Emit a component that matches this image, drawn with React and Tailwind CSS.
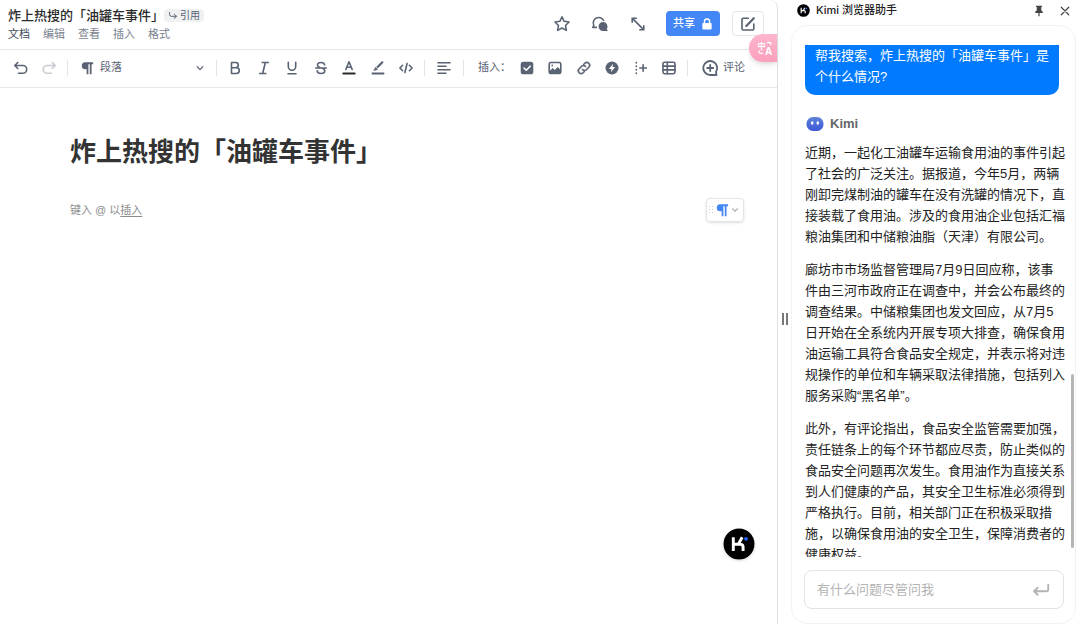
import React from 'react';

const Icon = ({ size = 16, className = '', children }) => (
    <svg
        width={size}
        height={size}
        viewBox="0 0 16 16"
        fill="none"
        stroke="currentColor"
        strokeWidth="1.6"
        strokeLinecap="round"
        strokeLinejoin="round"
        className={`shrink-0 ${className}`}
        aria-hidden="true"
    >
        {children}
    </svg>
);

const Pilcrow = ({ className }) => (
    <Icon className={className} size={14}>
        <path d="M15 1.5H6a4 4 0 0 0 0 8h1.6V15h2V3.6h1.6V15h2V3.6H15z" fill="currentColor" stroke="none" />
    </Icon>
);

const KimiLogo = ({ className }) => (
    <svg viewBox="0 0 32 32" className={`shrink-0 ${className}`} aria-hidden="true">
        <circle cx="16" cy="16" r="15.5" fill="#000" />
        <path d="M10.3 9.300v13.700M19.200 9.300l-3.600 6.500M10.300 16.200h7.200q2.600.2 2.600 3V23" fill="none" stroke="#fff" strokeWidth="2.900" />
        <circle cx="23" cy="10.800" r="1.900" fill="#2563ff" />
    </svg>
);

const formatTools = [
    { label: '粗体', icon: <path d="M4.5 2.5h4.2a2.6 2.6 0 0 1 0 5.2H4.5zM4.5 7.7h4.9a2.9 2.9 0 0 1 0 5.8H4.5z" /> },
    { label: '斜体', icon: <path d="M6.300 2.500h6M3.700 13.500h6M9.300 2.500l-2.600 11" /> },
    { label: '下划线', icon: <path d="M4.300 2.300v4.200a3.700 3.700 0 0 0 7.400 0V2.300M4 13.800h8" /> },
    {
        label: '删除线',
        icon: <path d="M11.6 4.8C11.3 3.3 9.9 2.5 8 2.5c-2.1 0-3.5 1-3.5 2.5 0 1.2.9 2 2.4 2.5M2.7 8h10.6M9.8 8.5c1.4.5 2 1.2 2 2.3 0 1.7-1.5 2.7-3.7 2.7-2.2 0-3.7-.9-3.9-2.6" />,
    },
    {
        label: '文字颜色',
        icon: (
            <>
                <path d="M4.800 9.500L8 1.800l3.200 7.700M5.800 7.300h4.400" />
                <path d="M2.300 13.400h11.400" stroke="#2b2b2b" strokeWidth="2" />
            </>
        ),
    },
    {
        label: '高亮',
        icon: (
            <>
                <path d="M12.300 2.300L7.600 7" strokeWidth="2.200" />
                <path d="M5.700 7.600l1.800 1.800-3.200 1z" fill="currentColor" strokeWidth="0.800" />
                <path d="M2.500 13.400h11" strokeWidth="2" />
            </>
        ),
    },
    { label: '代码', icon: <path d="M4.600 5.300L1.900 8l2.700 2.700M11.400 5.300L14.100 8l-2.700 2.700M9.100 3.500l-2.200 9" /> },
];

const insertTools = [
    {
        label: '待办',
        icon: (
            <>
                <rect x="1.700" y="1.700" width="12.600" height="12.600" rx="2.600" fill="currentColor" stroke="none" />
                <path d="M5 8l2.200 2.200 4-4" stroke="#fff" />
            </>
        ),
    },
    {
        label: '图片',
        icon: (
            <>
                <rect x="2.200" y="2.500" width="11.600" height="11" rx="1.600" />
                <path d="M2.500 11.200L5.600 8l2.200 2 2.900-3 3 3v3.200H2.500z" fill="currentColor" stroke="none" />
                <circle cx="5.200" cy="5.400" r="0.900" fill="currentColor" stroke="none" />
            </>
        ),
    },
    {
        label: '链接',
        icon: (
            <path d="M6.500 9.500a2.600 2.600 0 0 0 3.900.2l2.400-2.400a2.800 2.800 0 0 0-4-4L7.600 4.500M9.500 6.500a2.600 2.600 0 0 0-3.900-.2L3.200 8.700a2.800 2.800 0 0 0 4 4l1.200-1.200" />
        ),
    },
    {
        label: '快捷',
        icon: (
            <>
                <circle cx="8" cy="8" r="6.500" fill="currentColor" stroke="none" />
                <path d="M9 3.800L4.900 8.900h2.600L7 12.200l4.100-5.100H8.500z" fill="#fff" stroke="none" />
            </>
        ),
    },
    {
        label: '更多',
        icon: (
            <>
                <path d="M3.300 2.600v.2M3.300 6.100v.2M3.300 9.600v.2M3.300 13.100v.2" strokeWidth="1.800" />
                <path d="M6.800 8h6.600M10.100 4.700v6.600" />
            </>
        ),
    },
    {
        label: '表格',
        icon: (
            <>
                <rect x="2" y="2.300" width="12" height="11.400" rx="1.600" />
                <path d="M2 6.100h12M2 9.900h12M6.300 2.300v11.400" />
            </>
        ),
    },
];

const ToolButton = ({ label, children, className = '' }) => (
    <button type="button" aria-label={label} className={`flex h-7 w-7 items-center justify-center ${className}`}>
        {children}
    </button>
);

const Divider = () => <span className="h-4 w-px shrink-0 bg-[#e3e5e8]" />;

const DocHeader = () => (
    <header className="relative flex h-[50px] shrink-0 items-center justify-between border-b border-[#e6e7e9] pr-[13px] pb-0.5 pl-2">
        <div>
            <div className="flex items-center">
                <span className="text-[13px] leading-5 font-medium text-[#2b2b2b]">炸上热搜的「油罐车事件」</span>
                <button type="button" className="flex h-[13px] items-center gap-0.5 rounded bg-[#eff0f2] px-1 text-[10px] text-[#596373]">
                    <Icon size={10}>
                        <path d="M2.500 2.500v3a3 3 0 0 0 3 3h8M10 5l3.500 3.500L10 12" />
                    </Icon>
                    引用
                </button>
            </div>
            <nav className="flex gap-[13px] text-[11px] leading-4 text-[#7a828e]">
                <button type="button" className="text-[#404a59]">文档</button>
                <button type="button">编辑</button>
                <button type="button">查看</button>
                <button type="button">插入</button>
                <button type="button">格式</button>
            </nav>
        </div>

        <div className="flex items-center text-[#596373]">
            <div className="mr-3.5 flex gap-2.5">
                <ToolButton label="收藏">
                    <Icon size={18}>
                        <path d="M8 1.600l1.900 4 4.400.6-3.200 3.100.8 4.400L8 11.600l-3.900 2.100.8-4.400-3.200-3.100 4.400-.6z" strokeWidth="1.400" />
                    </Icon>
                </ToolButton>
                <ToolButton label="评论列表">
                    <Icon size={18}>
                        <path d="M4.800 11H1.600l.9-1.800a4.700 4.700 0 1 1 8.700-4.300" strokeWidth="1.400" />
                        <path d="M10.700 6.200a4 4 0 1 0 0 8h4.300l-1-1.700a4 4 0 0 0-3.300-6.300z" fill="currentColor" stroke="none" />
                    </Icon>
                </ToolButton>
                <ToolButton label="展开">
                    <Icon>
                        <path d="M2.200 6.800V2.200h4.600M2.400 2.400l11.200 11.200M13.800 9.200v4.600H9.200" strokeLinecap="butt" strokeLinejoin="miter" />
                    </Icon>
                </ToolButton>
            </div>
            <button type="button" className="mr-3 flex h-[25px] w-[54px] items-center justify-center gap-1.5 rounded bg-[#4287f5] text-[11px] font-medium text-white">
                共享
                <Icon size={12}>
                    <path d="M4.600 7V4.800a3.400 3.400 0 0 1 6.800 0V7" strokeWidth="1.900" />
                    <rect x="1.800" y="6.500" width="12.400" height="8.800" rx="1.200" fill="currentColor" stroke="none" />
                </Icon>
            </button>
            <button type="button" aria-label="新建" className="flex h-[25px] w-8 items-center justify-center rounded border border-[#e3e5e8]">
                <Icon>
                    <path d="M8.400 2.200H3.200A1.200 1.200 0 0 0 2 3.400v9.400A1.200 1.200 0 0 0 3.200 14h9.400a1.200 1.200 0 0 0 1.200-1.200V8" />
                    <path d="M6.300 9.900l7.500-7.700" strokeWidth="2.200" />
                </Icon>
            </button>
        </div>

        <button
            type="button"
            aria-label="翻译"
            className="absolute top-[34px] right-0 flex h-7 w-7 items-center justify-center rounded-l-full bg-linear-to-b from-[#fdb6cd] to-[#fa9fbc] pl-1 text-white shadow-md"
        >
            <Icon>
                <text x="0.500" y="8.500" fontSize="8" fontWeight="700" fill="currentColor" stroke="none">中</text>
                <text x="8" y="14.500" fontSize="10" fontWeight="700" fill="currentColor" stroke="none">A</text>
                <path d="M10.500 2.500h1.800q1.500 0 1.500 1.500v.8M2 10.800v1q0 1.500 1.500 1.500h2" strokeWidth="1.300" />
            </Icon>
        </button>
    </header>
);

const Toolbar = () => (
    <div className="flex h-[38px] shrink-0 items-center border-b border-[#e6e7e9] pb-0.5 text-[11px] text-[#596373]">
        <ToolButton label="撤销" className="ml-[7px]">
            <Icon><path d="M4.800 2.500L1.800 5.500l3 3M2 5.500h7.800a3.900 3.900 0 0 1 0 7.800H5.500" /></Icon>
        </ToolButton>
        <ToolButton label="重做" className="mr-1 text-[#c9ccd1]">
            <Icon><path d="M11.200 2.500l3 3-3 3M14 5.500H6.200a3.900 3.900 0 0 0 0 7.800h4.300" /></Icon>
        </ToolButton>
        <Divider />
        <label className="mr-[11px] ml-3 flex items-center">
            <Pilcrow />
            <select aria-label="段落样式" className="ml-1.5 w-[95px] appearance-none bg-transparent">
                <option>段落</option>
            </select>
            <Icon size={10}><path d="M3.500 6L8 10.500 12.500 6" strokeWidth="1.800" /></Icon>
        </label>
        <Divider />
        <div className="mx-1 flex w-[199px] justify-between">
            {formatTools.map((tool) => (
                <ToolButton key={tool.label} label={tool.label}>
                    <Icon>{tool.icon}</Icon>
                </ToolButton>
            ))}
        </div>
        <Divider />
        <ToolButton label="对齐" className="mx-[5px]">
            <Icon><path d="M2 2.800h12M2 6.300h8M2 9.800h12M2 13.300h8" /></Icon>
        </ToolButton>
        <Divider />
        <span className="ml-3.5 w-[35px] whitespace-nowrap">插入：</span>
        <div className="mr-1 flex w-[170px] justify-between">
            {insertTools.map((tool) => (
                <ToolButton key={tool.label} label={tool.label}>
                    <Icon>{tool.icon}</Icon>
                </ToolButton>
            ))}
        </div>
        <Divider />
        <button type="button" className="ml-[13px] flex items-center gap-1 whitespace-nowrap">
            <Icon size={18}>
                <path d="M13.800 14.200H8.200a6.200 6.200 0 1 1 5.100-2.700zM8.200 5.300v5.400M5.500 8h5.400" />
            </Icon>
            评论
        </button>
    </div>
);

const Editor = () => (
    <main className="relative flex min-w-0 flex-1 flex-col rounded-tr-lg border-r border-[#e0e1e3] bg-white">
        <DocHeader />
        <Toolbar />
        <article className="flex-1 pt-11 pr-[33px] pl-[70px]">
            <h1 className="text-[26px] leading-10 font-bold text-[#333]">炸上热搜的「油罐车事件」</h1>
            <div className="mt-[26px] flex items-center justify-between">
                <p className="text-[11px] text-[#8c8c8c]">
                    键入 @ 以<a href="#insert" className="underline underline-offset-2">插入</a>
                </p>
                <button
                    type="button"
                    aria-label="段落菜单"
                    className="flex h-6 w-[38px] items-center justify-center gap-0.5 rounded border border-[#e3e4e8] pr-0.5 text-[#4287f5] shadow-sm"
                >
                    <svg width="4" height="10" viewBox="0 0 4 10" fill="#c9ccd1" aria-hidden="true">
                        <path d="M0 1h1v1H0zM3 1h1v1H3zM0 4h1v1H0zM3 4h1v1H3zM0 7h1v1H0zM3 7h1v1H3z" />
                    </svg>
                    <Pilcrow />
                    <Icon size={8} className="text-[#b4b8bf]"><path d="M3 5.500l5 5 5-5" strokeWidth="2.400" /></Icon>
                </button>
            </div>
        </article>
        <button type="button" aria-label="打开 Kimi" className="absolute right-[22px] bottom-16 h-8 w-8 rounded-full shadow">
            <KimiLogo className="h-8 w-8" />
        </button>
    </main>
);

const answer = [
    '近期，一起化工油罐车运输食用油的事件引起了社会的广泛关注。据报道，今年5月，两辆刚卸完煤制油的罐车在没有洗罐的情况下，直接装载了食用油。涉及的食用油企业包括汇福粮油集团和中储粮油脂（天津）有限公司。',
    '廊坊市市场监督管理局7月9日回应称，该事件由三河市政府正在调查中，并会公布最终的调查结果。中储粮集团也发文回应，从7月5日开始在全系统内开展专项大排查，确保食用油运输工具符合食品安全规定，并表示将对违规操作的单位和车辆采取法律措施，包括列入服务采购“黑名单”。',
    '此外，有评论指出，食品安全监管需要加强，责任链条上的每个环节都应尽责，防止类似的食品安全问题再次发生。食用油作为直接关系到人们健康的产品，其安全卫生标准必须得到严格执行。目前，相关部门正在积极采取措施，以确保食用油的安全卫生，保障消费者的健康权益。',
];

const Assistant = () => (
    <aside className="flex w-[289px] shrink-0 flex-col pr-1">
        <header className="flex h-[25px] shrink-0 items-center pr-[5px] pb-1 pl-1.5 font-['Inter','Noto_Sans_CJK_SC',sans-serif] text-[11px] text-[#222]">
            <KimiLogo className="mr-1.5 h-[13px] w-[13px]" />
            <span className="flex-1 font-medium">Kimi 浏览器助手</span>
            <button type="button" aria-label="固定" className="mr-3.5 text-[#444]">
                <Icon size={12}>
                    <path d="M4 1h8v1.600h-1V7l2 2v1.600H8.800V15H7.200v-4.400H3V9l2-2V2.600H4z" fill="currentColor" stroke="none" />
                </Icon>
            </button>
            <button type="button" aria-label="关闭" className="text-[#444]">
                <Icon size={12}><path d="M3 3l10 10M13 3L3 13" /></Icon>
            </button>
        </header>

        <section className="flex min-h-0 flex-1 flex-col rounded-2xl border border-[#f3f3f3] pb-3.5">
            <div className="mt-[19px] min-h-0 flex-1 overflow-y-auto pr-[10px] pl-[13px] text-[13px] leading-[21px] [scrollbar-width:none]">
                <p className="mr-1.5 rounded-b-[10px] bg-[#007aff] px-2.5 pb-2 text-white">
                    帮我搜索，炸上热搜的「油罐车事件」是个什么情况?
                </p>
                <div className="mt-[18px] mb-2 flex items-center gap-1.5">
                    <svg width="18" height="14" viewBox="0 0 18 14" className="ml-px" aria-hidden="true">
                        <defs>
                            <linearGradient id="face" x1="0" y1="0" x2="0" y2="1">
                                <stop offset="0" stopColor="#5d84d8" />
                                <stop offset="1" stopColor="#3e56d6" />
                            </linearGradient>
                        </defs>
                        <rect x="0.500" width="17" height="14" rx="6.500" fill="url(#face)" />
                        <ellipse cx="6.200" cy="6" rx="1.300" ry="1.700" fill="#fff" />
                        <ellipse cx="11.800" cy="6" rx="1.300" ry="1.700" fill="#fff" />
                    </svg>
                    <span className="font-bold text-[#666]">Kimi</span>
                </div>
                <div className="flex flex-col gap-3 text-[#222]">
                    {answer.map((text) => (
                        <p key={text}>{text}</p>
                    ))}
                </div>
            </div>

            <form className="mt-[13px] mr-[11px] ml-3 flex h-[39px] shrink-0 items-center rounded-lg border border-[#e2e2e2] pr-3 pl-3">
                <input
                    type="text"
                    aria-label="提问"
                    placeholder="有什么问题尽管问我"
                    className="min-w-0 flex-1 bg-transparent text-[13px] outline-none placeholder:text-[#b3b3b3]"
                />
                <button type="button" aria-label="发送" className="text-[#b3b3b3]">
                    <Icon size={20}>
                        <path d="M13.800 3.800v4a1.200 1.200 0 0 1-1.200 1.200H2.500M5.300 6.200L2.400 9l2.900 2.800" strokeWidth="1.500" />
                    </Icon>
                </button>
            </form>
        </section>
        <span className="absolute right-[6px] bottom-[76px] h-[174px] w-[3px] rounded-full bg-[#b5b5b5]" />
    </aside>
);

const App = () => (
    <div className="relative flex h-screen overflow-hidden bg-white font-['Liberation_Sans','Noto_Sans_CJK_SC',sans-serif]">
        <Editor />
        <div className="flex w-[13px] shrink-0 items-center justify-center gap-0.5 pt-3.5">
            <span className="h-3 w-0.5 bg-[#777]" />
            <span className="h-3 w-0.5 bg-[#777]" />
        </div>
        <Assistant />
    </div>
);

export default App;
